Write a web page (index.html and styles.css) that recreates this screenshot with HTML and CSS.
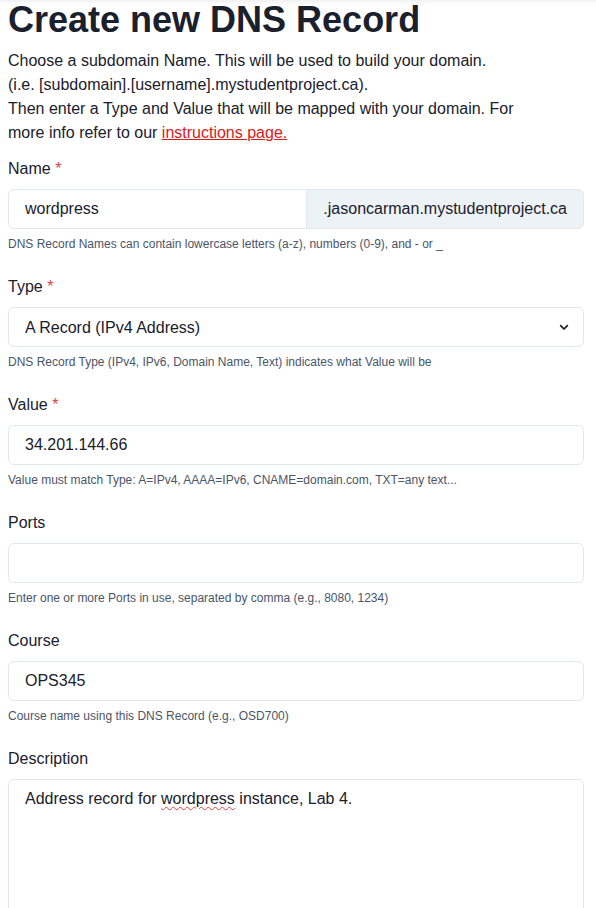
FILE: index.html
```html
<!DOCTYPE html>
<html lang="en">
<head>
<meta charset="utf-8">
<title>Create new DNS Record</title>
<link rel="stylesheet" href="styles.css">
</head>
<body>
<main class="page">
  <h1 class="title">Create new DNS Record</h1>
  <p class="intro">Choose a subdomain Name. This will be used to build your domain.<br>(i.e. [subdomain].[username].mystudentproject.ca).<br>Then enter a Type and Value that will be mapped with your domain. For more info refer to our <a class="link" href="#">instructions page.</a></p>

  <form class="form">
    <div class="field">
      <label class="label">Name <span class="req">*</span></label>
      <div class="group">
        <input class="input input-left" type="text" value="wordpress">
        <div class="addon">.jasoncarman.mystudentproject.ca</div>
      </div>
      <div class="help">DNS Record Names can contain lowercase letters (a-z), numbers (0-9), and - or _</div>
    </div>

    <div class="field">
      <label class="label">Type <span class="req">*</span></label>
      <div class="select-wrap">
        <select class="input select">
          <option>A Record (IPv4 Address)</option>
        </select>
        <svg class="chevron" viewBox="0 0 24 24" width="16" height="16" aria-hidden="true"><path d="M7 10l5 5 5-5" fill="none" stroke="#1A202C" stroke-width="2.6" stroke-linecap="round" stroke-linejoin="round"/></svg>
      </div>
      <div class="help">DNS Record Type (IPv4, IPv6, Domain Name, Text) indicates what Value will be</div>
    </div>

    <div class="field">
      <label class="label">Value <span class="req">*</span></label>
      <input class="input" type="text" value="34.201.144.66">
      <div class="help">Value must match Type: A=IPv4, AAAA=IPv6, CNAME=domain.com, TXT=any text...</div>
    </div>

    <div class="field">
      <label class="label">Ports</label>
      <input class="input" type="text" value="">
      <div class="help">Enter one or more Ports in use, separated by comma (e.g., 8080, 1234)</div>
    </div>

    <div class="field">
      <label class="label">Course</label>
      <input class="input" type="text" value="OPS345">
      <div class="help">Course name using this DNS Record (e.g., OSD700)</div>
    </div>

    <div class="field">
      <label class="label">Description</label>
      <div class="input textarea" role="textbox" aria-multiline="true">Address record for <span class="misspelled">wordpress</span> instance, Lab 4.</div>
    </div>
  </form>
</main>
</body>
</html>
```

FILE: styles.css
```css
* { box-sizing: border-box; }

html, body {
  margin: 0;
  padding: 0;
}

body {
  font-family: "Liberation Sans", Arial, sans-serif;
  color: #1A202C;
  background: linear-gradient(to bottom, #f1f1f1 0, #fafafa 3px, #ffffff 6px);
  background-repeat: no-repeat;
  background-color: #ffffff;
}

.page {
  width: 576px;
  margin-left: 8px;
}

.title {
  margin: 0;
  padding-top: 0;
  font-size: 36px;
  line-height: 40px;
  font-weight: 700;
  color: #1A202C;
}

.intro {
  margin: 9px 0 0;
  max-width: 530px;
  font-size: 16px;
  line-height: 24px;
}

.link {
  color: #D91A1A;
  text-decoration: underline;
}

.form {
  margin-top: 12px;
  display: flex;
  flex-direction: column;
  gap: 23px;
}

.field {
  display: flex;
  flex-direction: column;
}

.label {
  font-size: 16px;
  line-height: 24px;
  margin-bottom: 8px;
  color: #1A202C;
}

.req {
  color: #E53E3E;
}

.input {
  width: 100%;
  height: 40px;
  padding: 0 16px;
  border: 1px solid #E2E8F0;
  border-radius: 6px;
  background: #ffffff;
  font-family: "Liberation Sans", Arial, sans-serif;
  font-size: 16px;
  color: #1A202C;
  outline: none;
}

.group {
  display: flex;
  width: 100%;
}

.input-left {
  flex: 1;
  min-width: 0;
  border-top-right-radius: 0;
  border-bottom-right-radius: 0;
}

.addon {
  display: flex;
  align-items: center;
  height: 40px;
  padding: 0 16px;
  background: #EDF2F7;
  border: 1px solid #E2E8F0;
  border-left: none;
  border-radius: 0 6px 6px 0;
  font-size: 16px;
  white-space: nowrap;
  color: #1A202C;
}

.select-wrap {
  position: relative;
  width: 100%;
}

.select {
  appearance: none;
  -webkit-appearance: none;
  padding-right: 40px;
}

.chevron {
  position: absolute;
  right: 12px;
  top: 12px;
  pointer-events: none;
}

.help {
  margin-top: 7px;
  font-size: 12px;
  line-height: 16px;
  color: #4A5568;
}

.textarea {
  height: 160px;
  padding: 7px 16px;
  line-height: 24px;
}

.misspelled {
  text-decoration: underline wavy #E53E3E;
  text-decoration-thickness: 1px;
  text-underline-offset: 2px;
}
```
